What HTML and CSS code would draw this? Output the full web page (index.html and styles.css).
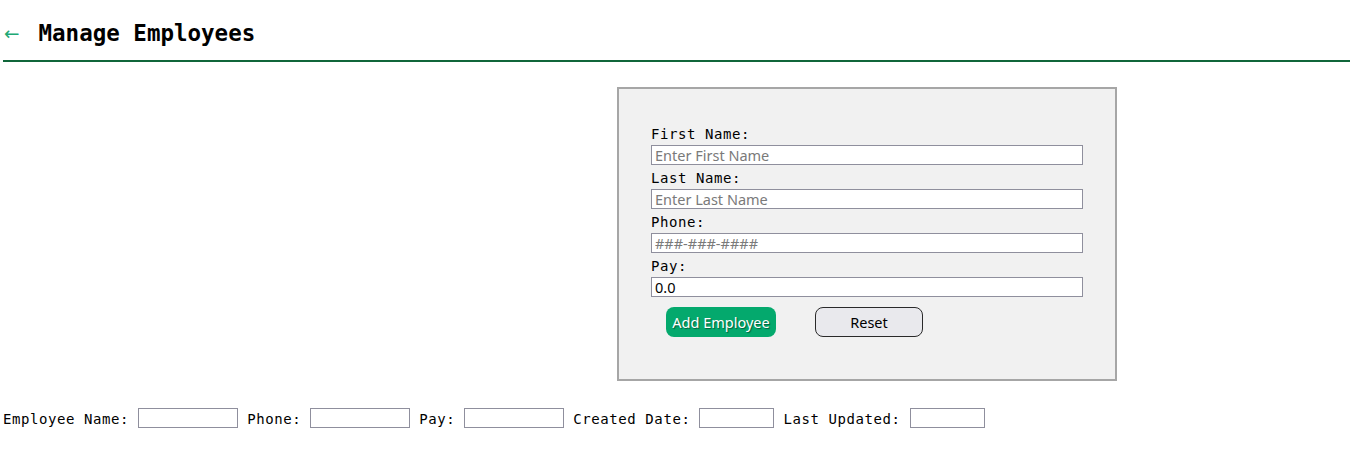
FILE: index.html
```html
<!DOCTYPE html>
<html>
<head>
<meta charset="utf-8">
<title>Manage Employees</title>
<link rel="stylesheet" href="styles.css">
</head>
<body>
<header class="header">
  <a class="back" href="#">←</a>
  <h1 class="title">Manage Employees</h1>
</header>
<main class="main">
  <form class="emp-form">
    <label class="field-label">First Name:</label>
    <input class="field-input" type="text" placeholder="Enter First Name">
    <label class="field-label">Last Name:</label>
    <input class="field-input" type="text" placeholder="Enter Last Name">
    <label class="field-label">Phone:</label>
    <input class="field-input" type="text" placeholder="###-###-####">
    <label class="field-label">Pay:</label>
    <input class="field-input" type="text" value="0.0">
    <div class="actions">
      <button class="btn btn-add" type="button">Add Employee</button>
      <button class="btn btn-reset" type="reset">Reset</button>
    </div>
  </form>
</main>
<div class="filters">Employee Name: <input class="filter-input" type="text"> Phone: <input class="filter-input" type="text"> Pay: <input class="filter-input" type="text"> Created Date: <input class="filter-input short" type="text"> Last Updated: <input class="filter-input short" type="text"></div>
</body>
</html>
```
FILE: styles.css
```css
html, body {
  margin: 0;
  padding: 0;
  background: #ffffff;
}
body {
  padding: 0 0 0 3px;
  font-family: "DejaVu Sans Mono", monospace;
  font-size: 14px;
  letter-spacing: 0.58px;
  color: #000;
}
.header {
  display: flex;
  align-items: center;
  height: 58px;
  border-bottom: 2px solid #10663a;
  margin-top: 2px;
  letter-spacing: 0;
}
.back {
  font-family: "DejaVu Sans", sans-serif;
  font-size: 18.5px;
  color: #20a874;
  text-decoration: none;
  margin-left: 1px;
  margin-right: 19px;
  position: relative;
  top: 2px;
}
.title {
  margin: 0;
  font-family: "DejaVu Sans Mono", monospace;
  font-size: 22.5px;
  font-weight: bold;
  position: relative;
  top: 2px;
}
.main {
  padding-top: 25px;
  padding-left: 614px;
}
.emp-form {
  width: 500px;
  box-sizing: border-box;
  background: #f1f1f1;
  border: 2px solid #a6a6a6;
  padding: 35px 32px 42px 32px;
  display: flex;
  flex-direction: column;
}
.field-label {
  display: block;
  line-height: 18px;
  padding-top: 1px;
  margin-bottom: -1px;
}
.field-input {
  height: 20px;
  box-sizing: border-box;
  margin: 3px 0;
  padding: 0 3px;
  border: 1px solid #8f8f9d;
  border-radius: 0;
  background: #fff;
  font-family: "Noto Sans", sans-serif;
  font-size: 14.5px;
  letter-spacing: 0;
  color: #000;
}
.field-input::placeholder {
  color: #7a7a7a;
  opacity: 1;
}
.actions {
  display: flex;
  margin-top: 7px;
  padding-left: 15px;
  gap: 39px;
}
.btn {
  height: 30px;
  box-sizing: border-box;
  border-radius: 8px;
  font-family: "Noto Sans", sans-serif;
  font-size: 14.5px;
  letter-spacing: 0;
  padding: 0;
  cursor: pointer;
}
.btn-add {
  width: 110px;
  background: #04a96d;
  color: #fff;
  border: none;
  text-shadow: 1px 1px 1px rgba(0,0,0,0.45);
}
.btn-reset {
  width: 108px;
  background: #e9e9ed;
  color: #000;
  border: 1px solid #2a2a2a;
}
.filters {
  margin-top: 26px;
  line-height: 24px;
  white-space: nowrap;
}
.filter-input {
  width: 100px;
  height: 20px;
  box-sizing: border-box;
  margin: 0;
  padding: 0 3px;
  border: 1px solid #8f8f9d;
  border-radius: 0;
  background: #fff;
  vertical-align: 1px;
  font-family: "Noto Sans", sans-serif;
  font-size: 14px;
  letter-spacing: 0;
}
.filter-input.short {
  width: 75px;
}
```
